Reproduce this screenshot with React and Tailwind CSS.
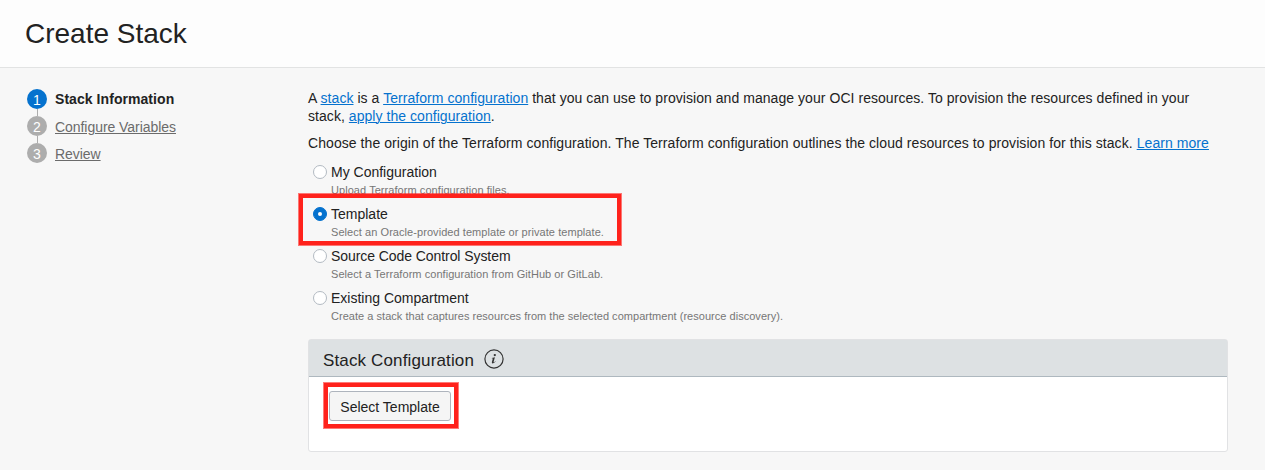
const steps = ["Stack Information", "Configure Variables", "Review"];

const origins = [
  { title: "My Configuration", hint: "Upload Terraform configuration files.", hintClass: "tracking-[0.06px]" },
  { title: "Template", hint: "Select an Oracle-provided template or private template.", hintClass: "tracking-[0.06px]", selected: true },
  { title: "Source Code Control System", titleClass: "tracking-[-0.07px]", hint: "Select a Terraform configuration from GitHub or GitLab.", hintClass: "tracking-[0.05px]" },
  { title: "Existing Compartment", hint: "Create a stack that captures resources from the selected compartment (resource discovery).", hintClass: "tracking-[0.03px]" },
];

function Link({ children }) {
  return <a href="#" className="text-[#0572ce] underline decoration-1 underline-offset-1">{children}</a>;
}

function Step({ index, label }) {
  const active = index === 0;
  return (
    <li>
      {index > 0 && <div className="ml-[10px] h-[7px] w-px bg-[#adadad]" />}
      <div className="flex h-5 items-center gap-2">
        <span className={`flex size-5 items-center justify-center rounded-full pt-px text-[14px] leading-5 text-white ${active ? "bg-[#0572ce]" : "bg-[#adadad]"}`}>
          {index + 1}
        </span>
        {active ? (
          <span className="font-bold tracking-[0.06px] text-[#222]">{label}</span>
        ) : (
          <a href="#" className="pt-[2px] tracking-[-0.05px] text-[#6b6b6b] underline decoration-1 underline-offset-1">{label}</a>
        )}
      </div>
    </li>
  );
}

function Origin({ title, titleClass = "", hint, hintClass, selected }) {
  return (
    <div className="relative flex h-[42px] gap-[4px] pl-[5px]">
      <span className={`mt-[2px] flex size-[14px] shrink-0 items-center justify-center rounded-full border ${selected ? "border-[#0572ce] bg-[#0572ce]" : "border-[#b3bac2] bg-white"}`}>
        {selected && <span className="size-1 rounded-full bg-white" />}
      </span>
      <div className="whitespace-nowrap">
        <div className={`leading-[18px] ${titleClass}`}>{title}</div>
        <div className={`text-[11px] leading-[18px] text-[#767676] ${hintClass}`}>{hint}</div>
      </div>
      {selected && <div className="absolute left-[-9px] top-[-11px] z-10 h-[51px] w-[322px] border-4 border-[#ff221c] ring-1 ring-[#ff221c]/60" />}
    </div>
  );
}

export default function App() {
  return (
    <div className="h-[470px] w-[1265px] overflow-hidden bg-[#f7f7f7] font-['Liberation_Sans',Arial,sans-serif] text-[14px] leading-[18px] text-[#222]">
      <header className="flex h-[68px] items-center border-b border-[#e2e3e3] bg-[#fdfdfd] pl-[25px]">
        <h1 className="text-[28px] leading-8">Create Stack</h1>
      </header>
      <div className="flex pt-[21px]">
        <ol className="w-[308px] shrink-0 pl-[27px]">
          {steps.map((label, i) => <Step key={label} index={i} label={label} />)}
        </ol>
        <main className="w-[920px]">
          <p className="whitespace-nowrap tracking-[0.05px]">
            A <Link>stack</Link> is a <Link>Terraform configuration</Link> that you can use to provision and manage your OCI resources. To provision the resources defined in your<br />
            stack, <Link>apply the configuration</Link>.
          </p>
          <p className="mt-[9px] whitespace-nowrap tracking-[0.068px]">
            Choose the origin of the Terraform configuration. The Terraform configuration outlines the cloud resources to provision for this stack. <Link>Learn more</Link>
          </p>
          <div className="mt-[11px]">
            {origins.map((o) => <Origin key={o.title} {...o} />)}
          </div>
          <section className="mt-[8px] h-[113px] rounded-[3px] border border-[#e1e2e4] bg-white">
            <div className="flex h-[37px] items-center gap-[10px] border-b border-[#aeb8bf] bg-[#dde1e3] pl-[14px]">
              <h2 className="pt-[6px] text-[17px] leading-5 tracking-[0.14px]">Stack Configuration</h2>
              <svg width="20" height="20" viewBox="0 0 20 20" className="mt-px">
                <circle cx="10" cy="10" r="9.1" fill="none" stroke="#333" strokeWidth="1.2" />
                <circle cx="10.8" cy="6.1" r="1.15" fill="#333" />
                <path d="M7.8 8.9 L10.9 8.3 L9.6 13 Q9.6 13.8 11.4 12.3 L11.7 12.6 Q10 14.5 8.6 14.4 Q7.6 14.2 7.9 12.9 L8.8 9.5 L7.7 9.3 Z" fill="#333" />
              </svg>
            </div>
            <div className="pl-5 pt-[14px]">
              <div className="relative w-[122px]">
                <button className="h-[30px] w-[122px] whitespace-nowrap rounded-[3px] border border-[#aeb4bd] bg-[#f5f5f5] pt-[2px]">Select Template</button>
                <div className="absolute left-[-5px] top-[-8px] h-[45px] w-[134px] border-4 border-[#ff221c] ring-1 ring-[#ff221c]/60" />
              </div>
            </div>
          </section>
        </main>
      </div>
    </div>
  );
}
